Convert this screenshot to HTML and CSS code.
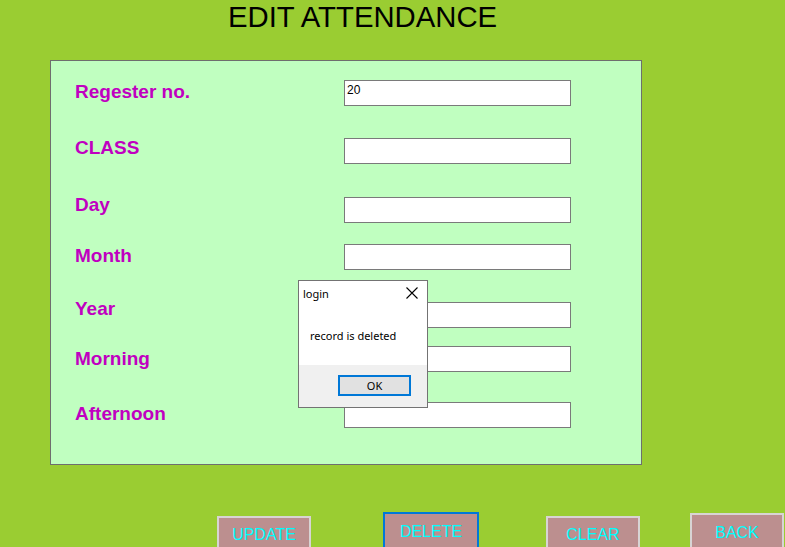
FILE: index.html
```html
<!DOCTYPE html>
<html>
<head>
<meta charset="utf-8">
<link rel="stylesheet" href="styles.css">
</head>
<body>
<h1 class="title">EDIT ATTENDANCE</h1>
<div class="panel">
  <div class="row r1"><span class="label">Regester no.</span><div class="field">20</div></div>
  <div class="row r2"><span class="label">CLASS</span><div class="field"></div></div>
  <div class="row r3"><span class="label">Day</span><div class="field"></div></div>
  <div class="row r4"><span class="label">Month</span><div class="field"></div></div>
  <div class="row r5"><span class="label">Year</span><div class="field"></div></div>
  <div class="row r6"><span class="label">Morning</span><div class="field"></div></div>
  <div class="row r7"><span class="label">Afternoon</span><div class="field"></div></div>
</div>
<div class="buttons">
  <div class="btn b-update">UPDATE</div>
  <div class="btn b-delete">DELETE</div>
  <div class="btn b-clear">CLEAR</div>
  <div class="btn b-back">BACK</div>
</div>
<div class="dialog">
  <div class="dlg-title">
    <span>login</span>
    <svg class="dlg-close" width="12" height="12" viewBox="0 0 12 12"><path d="M0.5 0.5 L11.5 11.5 M11.5 0.5 L0.5 11.5" stroke="#000" stroke-width="1.1" fill="none"/></svg>
  </div>
  <div class="dlg-body">record is deleted</div>
  <div class="dlg-foot"><div class="ok">OK</div></div>
</div>
</body>
</html>
```
FILE: styles.css
```css
html, body {
  margin: 0;
  padding: 0;
  height: 547px;
  overflow: hidden;
}
body {
  background: #9acd32;
  font-family: "Liberation Sans", Arial, sans-serif;
  position: relative;
}
.title {
  margin: 0;
  height: 60px;
  box-sizing: border-box;
  padding: 1px 0 0 228px;
  font-size: 29.3px;
  line-height: 32px;
  font-weight: normal;
  color: #000;
}
.panel {
  margin-left: 50px;
  width: 592px;
  height: 405px;
  box-sizing: border-box;
  border: 1px solid #6e6e6e;
  background: #c0ffc0;
  padding: 19px 0 0 24px;
}
.row {
  display: grid;
  grid-template-columns: 269px 227px;
  align-items: start;
}
.label {
  font-size: 19px;
  font-weight: bold;
  line-height: 22px;
  color: #c000c0;
}
.field {
  height: 26px;
  box-sizing: border-box;
  border: 1px solid #7a7a7a;
  background: #fff;
  font-size: 12px;
  line-height: 16px;
  padding: 1px 2px;
  color: #000;
}
.r1 .label { margin-top: 1px; }
.r2 { margin-top: 32px; }
.r2 .label { margin-top: -1px; }
.r3 { margin-top: 33px; }
.r3 .label { margin-top: -3px; }
.r4 { margin-top: 21px; }
.r4 .label { margin-top: 1px; }
.r5 { margin-top: 32px; }
.r5 .label { margin-top: -4px; }
.r6 { margin-top: 18px; }
.r6 .label { margin-top: 2px; }
.r7 { margin-top: 30px; }
.r7 .label { margin-top: 1px; }

.buttons {
  display: flex;
  align-items: flex-start;
  padding-left: 217px;
  margin-top: 47px;
}
.btn {
  width: 94px;
  height: 40px;
  box-sizing: border-box;
  border: 2px solid #d8d4d4;
  background: #bc8f8f;
  color: #00ffff;
  font-size: 16px;
  line-height: 18px;
  padding-top: 8px;
  text-align: center;
}
.b-update { margin-top: 4px; }
.b-delete { margin-left: 72px; width: 96px; border-color: #0078d7; padding-top: 9px; }
.b-clear { margin-left: 67px; margin-top: 4px; }
.b-back { margin-left: 50px; margin-top: 1px; padding-top: 9px; }

.dialog {
  position: absolute;
  left: 298px;
  top: 280px;
  width: 130px;
  height: 128px;
  box-sizing: border-box;
  border: 1px solid #737373;
  background: #fff;
  display: flex;
  flex-direction: column;
  font-family: "Noto Sans", "DejaVu Sans", sans-serif;
  font-size: 11px;
  color: #000;
}
.dlg-title {
  display: flex;
  justify-content: space-between;
  align-items: center;
  height: 24px;
  padding: 0 9px 0 4px;
}
.dlg-body {
  flex: 1;
  padding: 24px 0 0 11px;
  line-height: 14px;
}
.dlg-foot {
  height: 42px;
  background: #f0f0f0;
  display: flex;
  justify-content: flex-end;
  padding: 10px 16px 0 0;
  box-sizing: border-box;
}
.ok {
  width: 73px;
  height: 21px;
  box-sizing: border-box;
  border: 2px solid #0078d7;
  background: #e1e1e1;
  text-align: center;
  line-height: 17px;
}
```
